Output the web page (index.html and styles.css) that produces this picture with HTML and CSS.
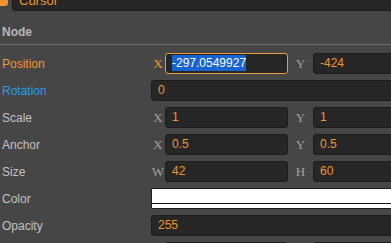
FILE: index.html
```html
<!DOCTYPE html>
<html>
<head>
<meta charset="utf-8">
<link rel="stylesheet" href="styles.css">
</head>
<body>
<div class="panel">
  <div class="name-row">
    <span class="check"></span>
    <div class="field name-field">Cursor</div>
  </div>
  <div class="section">Node</div>
  <div class="props">
    <div class="label active">Position</div>
    <div class="axis active">X</div>
    <div class="field focused"><span class="sel">-297.0549927</span></div>
    <div class="axis">Y</div>
    <div class="field">-424</div>

    <div class="label blue">Rotation</div>
    <div class="field wide">0</div>

    <div class="label">Scale</div>
    <div class="axis">X</div>
    <div class="field">1</div>
    <div class="axis">Y</div>
    <div class="field">1</div>

    <div class="label">Anchor</div>
    <div class="axis">X</div>
    <div class="field">0.5</div>
    <div class="axis">Y</div>
    <div class="field">0.5</div>

    <div class="label">Size</div>
    <div class="axis">W</div>
    <div class="field">42</div>
    <div class="axis">H</div>
    <div class="field">60</div>

    <div class="label">Color</div>
    <div class="color wide"><div class="color-main"></div><div class="color-alpha"></div></div>

    <div class="label">Opacity</div>
    <div class="field wide">255</div>

    <div class="label">Skew</div>
    <div class="axis">X</div>
    <div class="field">0</div>
    <div class="axis">Y</div>
    <div class="field">0</div>
  </div>
</div>
</body>
</html>
```
FILE: styles.css
```css
html, body {
  margin: 0;
  padding: 0;
  overflow: hidden;
  background: #464646;
}
body {
  font-family: "Liberation Sans", Arial, sans-serif;
  font-size: 12px;
  width: 391px;
  height: 243px;
}
.panel {
  width: 460px;
  margin-top: -11px;
}
.name-row {
  display: flex;
  align-items: center;
  gap: 4px;
  height: 22px;
  margin-left: -6px;
}
.check {
  width: 14px;
  height: 14px;
  border-radius: 3px;
  background: #ef9430;
  margin-top: -2px;
}
.name-field {
  flex: 1;
  height: 21px;
  padding-left: 6px;
  line-height: 14px;
  font-size: 13px;
}
.section {
  height: 23px;
  line-height: 22px;
  padding-top: 10px;
  padding-left: 2px;
  font-weight: bold;
  color: #b8b8b8;
  border-bottom: 1px solid #6b6b6b;
}
.props {
  display: grid;
  grid-template-columns: 151px 14px 123px 25px 123px;
  grid-auto-rows: 21px;
  row-gap: 6px;
  padding-top: 8px;
  align-items: center;
}
.label {
  padding-left: 2px;
  color: #c2c2c2;
  font-size: 12px;
}
.label.active { color: #f0952f; }
.label.blue { color: #2c9bea; }
.axis {
  font-family: "Liberation Serif", "Times New Roman", serif;
  font-size: 13px;
  color: #a0a0a0;
  text-align: center;
}
.axis.active { color: #f0952f; }
.field {
  box-sizing: border-box;
  height: 21px;
  line-height: 19px;
  background: #262626;
  border: 1px solid #1c1c1c;
  border-radius: 3px;
  color: #f0952f;
  padding-left: 6px;
  white-space: nowrap;
  overflow: hidden;
}
.field.focused {
  border-color: #ee9a3f;
}
.sel {
  background: #1763d0;
  color: #ffffff;
  padding: 1px 0;
}
.wide {
  grid-column: 2 / 6;
}
.color {
  box-sizing: border-box;
  height: 21px;
  border: 1px solid #1e1e1e;
  border-radius: 2px;
  background: #fff;
  display: flex;
  flex-direction: column;
}
.color-main {
  height: 14px;
  background: #ffffff;
  border-bottom: 1px solid #111;
}
.color-alpha {
  flex: 1;
  background: #ffffff;
}
```
